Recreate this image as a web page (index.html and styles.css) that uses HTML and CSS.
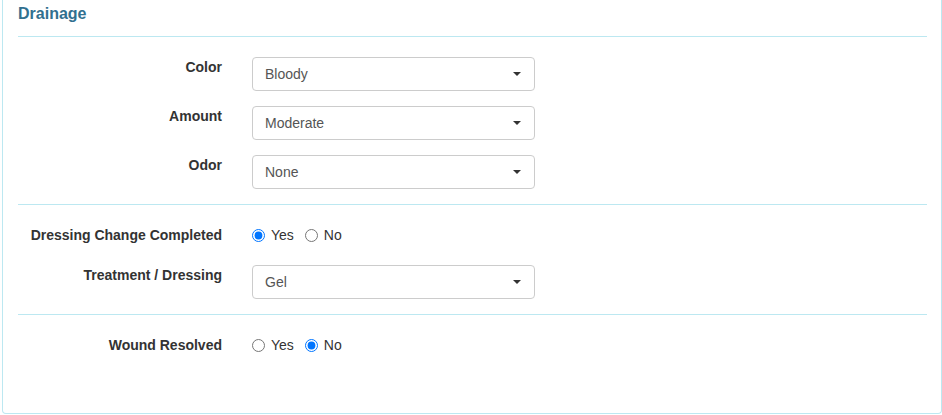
FILE: index.html
```html
<!DOCTYPE html>
<html>
<head>
<meta charset="utf-8">
<link rel="stylesheet" href="styles.css">
</head>
<body>
<div class="panel">
  <h4 class="title">Drainage</h4>
  <hr class="divider">
  <div class="row">
    <label class="lbl">Color</label>
    <div class="sel"><span class="sel-text">Bloody</span><span class="caret"></span></div>
  </div>
  <div class="row">
    <label class="lbl">Amount</label>
    <div class="sel"><span class="sel-text">Moderate</span><span class="caret"></span></div>
  </div>
  <div class="row">
    <label class="lbl">Odor</label>
    <div class="sel"><span class="sel-text">None</span><span class="caret"></span></div>
  </div>
  <hr class="divider">
  <div class="row row-radio">
    <label class="lbl">Dressing Change Completed</label>
    <div class="radios">
      <input type="radio" name="dcc" checked><span class="rtext">Yes</span>
      <input type="radio" name="dcc" class="second"><span class="rtext">No</span>
    </div>
  </div>
  <div class="row">
    <label class="lbl">Treatment / Dressing</label>
    <div class="sel"><span class="sel-text">Gel</span><span class="caret"></span></div>
  </div>
  <hr class="divider">
  <div class="row row-radio">
    <label class="lbl">Wound Resolved</label>
    <div class="radios">
      <input type="radio" name="wr"><span class="rtext">Yes</span>
      <input type="radio" name="wr" class="second" checked><span class="rtext">No</span>
    </div>
  </div>
</div>
</body>
</html>
```
FILE: styles.css
```css
html, body {
  margin: 0;
  padding: 0;
  background: #ffffff;
  font-family: "Liberation Sans", Arial, sans-serif;
  font-size: 14px;
  color: #333333;
}
.panel {
  box-sizing: border-box;
  margin-left: 2px;
  width: 940px;
  height: 414px;
  border: 1px solid #bce8f1;
  border-top: 0;
  border-radius: 0 0 4px 4px;
  padding: 0 14px 0 15px;
}
.title {
  margin: 0;
  padding-top: 4px;
  font-size: 16px;
  line-height: 20px;
  font-weight: bold;
  color: #31708f;
  height: 36px;
  box-sizing: border-box;
}
.divider {
  margin: 0 0 20px 0;
  border: 0;
  border-top: 1px solid #bce8f1;
  height: 0;
}
.row {
  display: grid;
  grid-template-columns: 204px 283px;
  column-gap: 30px;
  margin-bottom: 15px;
  align-items: start;
}
.lbl {
  text-align: right;
  font-weight: bold;
  line-height: 20px;
  color: #333333;
}
.sel {
  box-sizing: border-box;
  height: 34px;
  border: 1px solid #cccccc;
  border-radius: 4px;
  display: flex;
  align-items: center;
  justify-content: space-between;
  padding: 0 13px 0 12px;
  color: #555555;
  line-height: 20px;
}
.caret {
  width: 0;
  height: 0;
  border-left: 4px solid transparent;
  border-right: 4px solid transparent;
  border-top: 4px solid #333333;
}
.row-radio {
  padding-bottom: 5px;
}
.radios {
  display: flex;
  align-items: center;
  height: 20px;
}
.radios input {
  margin: 0;
  width: 13px;
  height: 13px;
}
.radios input.second {
  margin-left: 11px;
}
.rtext {
  margin-left: 6px;
  line-height: 20px;
  color: #333333;
}
```
